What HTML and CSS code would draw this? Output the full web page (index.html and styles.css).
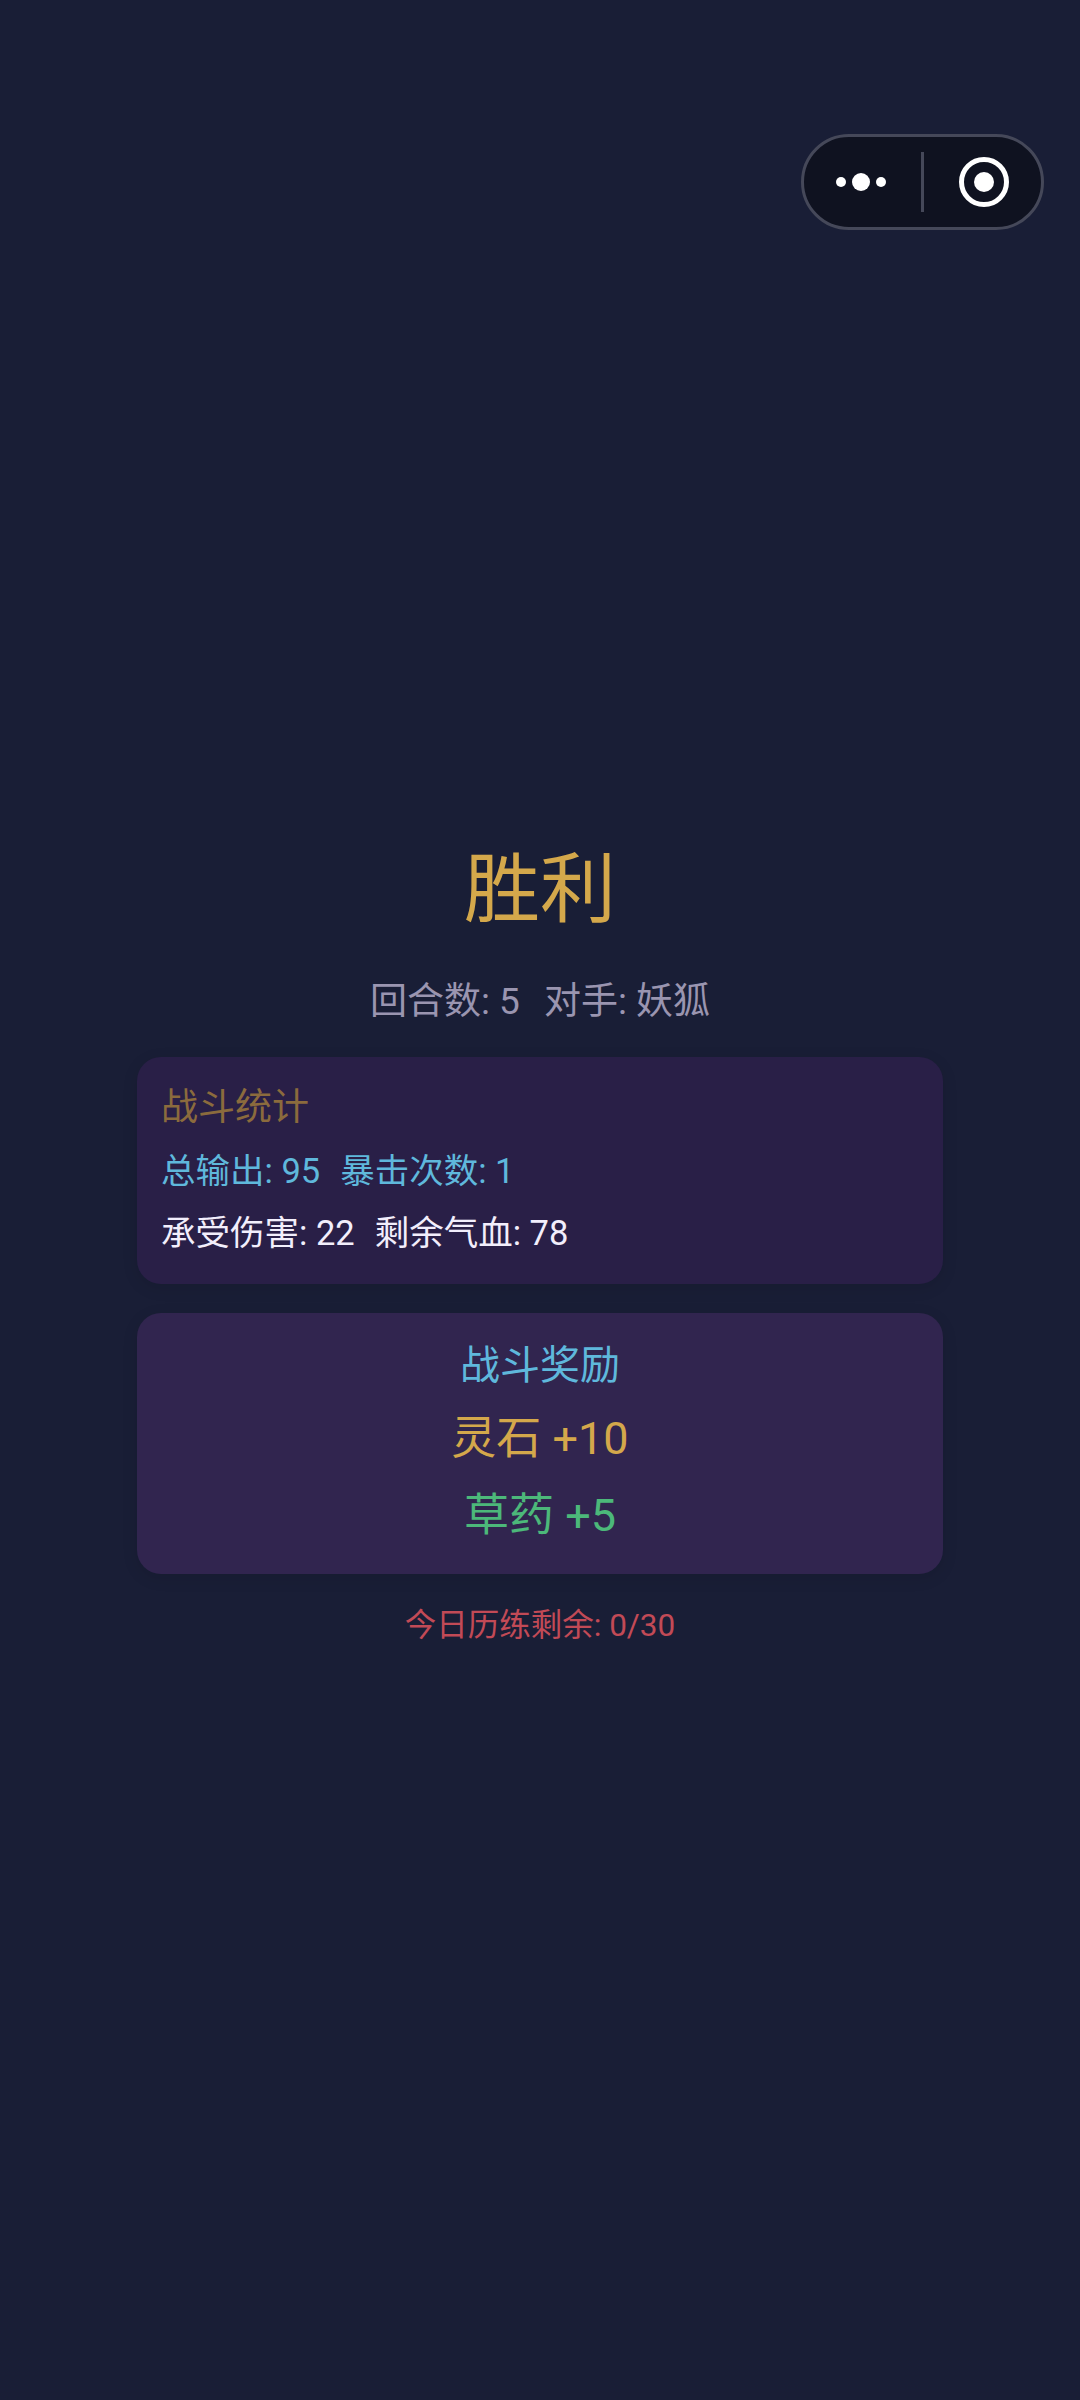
FILE: index.html
```html
<!DOCTYPE html>
<html lang="zh-CN">
<head>
    <meta charset="UTF-8">
    <meta name="viewport" content="width=device-width, initial-scale=1.0">
    <title>胜利</title>
    <link rel="stylesheet" href="styles.css">
</head>
<body>
    <div class="capsule">
        <div class="capsule-dots">
            <span class="dot"></span>
            <span class="dot dot-big"></span>
            <span class="dot"></span>
        </div>
        <div class="capsule-line"></div>
        <div class="capsule-target">
            <span class="target-core"></span>
        </div>
    </div>

    <div class="container">
        <h1 class="result-title">胜利</h1>
        <p class="result-info"><span>回合数: 5</span><span>对手: 妖狐</span></p>

        <div class="card stats">
            <p class="stats-title">战斗统计</p>
            <p class="stats-row blue"><span>总输出: 95</span><span>暴击次数: 1</span></p>
            <p class="stats-row white"><span>承受伤害: 22</span><span>剩余气血: 78</span></p>
        </div>

        <div class="card rewards">
            <p class="rewards-title">战斗奖励</p>
            <p class="reward gold">灵石 +10</p>
            <p class="reward green">草药 +5</p>
        </div>

        <p class="remaining">今日历练剩余: 0/30</p>
    </div>
</body>
</html>
```

FILE: styles.css
```css
* {
    box-sizing: border-box;
}
html, body {
    margin: 0;
    padding: 0;
}
body {
    width: 1080px;
    height: 2400px;
    overflow: hidden;
    background-color: #191e36;
    font-family: Roboto, "Noto Sans CJK SC", sans-serif;
    font-weight: 400;
}
p, h1 {
    margin: 0;
}
.capsule {
    position: absolute;
    top: 134px;
    left: 801px;
    width: 243px;
    height: 96px;
    display: flex;
    align-items: center;
    background-color: #0f1220;
    border: 3px solid #454859;
    border-radius: 48px;
}
.capsule-dots {
    width: 117px;
    padding-left: 32px;
    display: flex;
    align-items: center;
    gap: 6px;
}
.dot {
    width: 10px;
    height: 10px;
    border-radius: 50%;
    background-color: #fff;
}
.dot-big {
    width: 18px;
    height: 18px;
}
.capsule-line {
    width: 3px;
    height: 60px;
    background-color: #454859;
}
.capsule-target {
    width: 50px;
    height: 50px;
    margin-left: 35px;
    display: flex;
    align-items: center;
    justify-content: center;
    border: 5px solid #fff;
    border-radius: 50%;
}
.target-core {
    width: 20px;
    height: 20px;
    border-radius: 50%;
    background-color: #fff;
}
.container {
    padding: 838px 137px 0;
}
.result-title {
    font-size: 76px;
    line-height: 104px;
    font-weight: 400;
    text-align: center;
    color: #d4a84b;
}
.result-info {
    margin-top: 35px;
    display: flex;
    justify-content: center;
    gap: 24px;
    font-size: 37px;
    line-height: 50px;
    color: #9a95b0;
}
.card {
    border-radius: 24px;
    box-shadow: 0 4px 16px rgba(0, 0, 0, 0.1);
}
.stats {
    margin-top: 30px;
    height: 227px;
    padding: 26px 25px 0 24px;
    background-color: #291f47;
}
.stats-title {
    font-size: 37px;
    line-height: 50px;
    color: #8b6b3d;
}
.stats-row {
    margin-top: 14px;
    display: flex;
    gap: 20px;
    font-size: 34.5px;
    line-height: 48px;
}
.blue {
    color: #5fb8dc;
}
.white {
    color: #f2eefc;
}
.rewards {
    margin-top: 29px;
    height: 261px;
    padding-top: 29px;
    text-align: center;
    background-color: #31254f;
}
.rewards-title {
    font-size: 40px;
    line-height: 48px;
    color: #5fb8dc;
}
.reward {
    margin-top: 23px;
    font-size: 45px;
    line-height: 52px;
}
.gold {
    color: #d4a84b;
}
.green {
    margin-top: 25px;
    color: #4cb87a;
}
.remaining {
    margin-top: 30px;
    font-size: 31.5px;
    line-height: 44px;
    text-align: center;
    color: #c24a56;
}
```
